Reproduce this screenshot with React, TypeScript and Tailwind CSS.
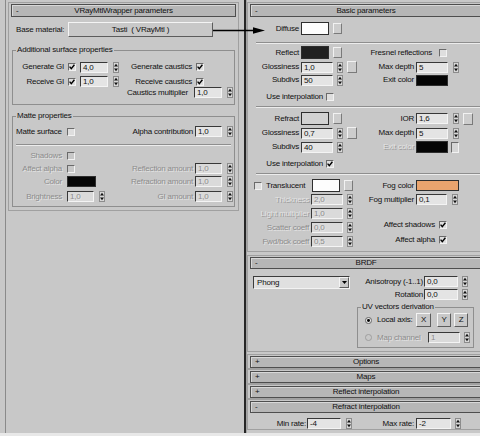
import type { ReactNode } from 'react'

type Tone = 'on' | 'dim' | 'faint'

const toneCls: Record<Tone, string> = {
  on:    'text-[#111111]',
  dim:   'text-[#8c8c8c] [text-shadow:1px_1px_0_#e4e4e4]',
  faint: 'text-[#e4e4e4] [text-shadow:1px_1px_0_#989898]',
}

function Txt({ className = '', tone = 'on', children }: { className?: string; tone?: Tone; children: ReactNode }) {
  return <span className={`shrink-0 whitespace-nowrap leading-[10px] ${toneCls[tone]} ${className}`}>{children}</span>
}

function Row({ className = '', children }: { className?: string; children?: ReactNode }) {
  return <div className={`flex items-center ${className}`}>{children}</div>
}

function Arrows({ className = '' }: { className?: string }) {
  return (
    <svg width="6" height="11" viewBox="0 0 6 11" className={`shrink-0 ${className}`}>
      <rect x="0.5" y="0.5" width="5" height="10" fill="#d8d8d8" stroke="#8c8c8c" />
      <path d="M3 1.8 L5 4.6 H1 Z" fill="#111" />
      <path d="M3 9.2 L5 6.4 H1 Z" fill="#111" />
    </svg>
  )
}

function Spin({
  value, w, className = '', gap = 'ml-[5px]', tone = 'on',
}: { value: string; w: string; className?: string; gap?: string; tone?: Tone }) {
  return (
    <div className={`flex items-center shrink-0 ${className}`}>
      <div
        className={`${w} h-[11px] pl-[2px] leading-[9px] border border-t-[#383838] border-l-[#383838] border-b-[#f4f4f4] border-r-[#f4f4f4] ${tone === 'on' ? 'bg-[#e4e4e4]' : 'bg-[#dadada]'} ${toneCls[tone]}`}
      >
        {value}
      </div>
      <Arrows className={gap} />
    </div>
  )
}

function Check({ on = false, dis = false, className = '' }: { on?: boolean; dis?: boolean; className?: string }) {
  return (
    <div
      className={`w-[8px] h-[8px] shrink-0 flex items-center justify-center border border-t-[#6a6a6a] border-l-[#6a6a6a] border-b-[#f2f2f2] border-r-[#f2f2f2] ${dis ? 'bg-[#c8c8c8]' : 'bg-[#dedede]'} ${className}`}
    >
      {on && (
        <svg width="6" height="6" viewBox="0 0 6 6">
          <path d="M0.6 2.6 L2.3 4.7 L5.4 0.8" fill="none" stroke="#000" strokeWidth="1.4" />
        </svg>
      )}
    </div>
  )
}

function Swatch({ className = '' }: { className?: string }) {
  return <div className={`shrink-0 border border-[#2e2e2e] ${className}`} />
}

function MapBtn({ className = '', size = 'w-[9px] h-[11px]' }: { className?: string; size?: string }) {
  return (
    <div className={`${size} shrink-0 bg-[#cdcdcd] border border-t-[#f2f2f2] border-l-[#f2f2f2] border-b-[#7a7a7a] border-r-[#7a7a7a] ${className}`} />
  )
}

function Raised({ className = '', children }: { className?: string; children?: ReactNode }) {
  return (
    <div
      className={`shrink-0 flex items-center justify-center bg-[#c8c8c8] border border-t-[#f4f4f4] border-l-[#f4f4f4] border-b-[#5c5c5c] border-r-[#5c5c5c] ${className}`}
    >
      {children}
    </div>
  )
}

function Radio({ on = false, dis = false }: { on?: boolean; dis?: boolean }) {
  return (
    <svg width="7" height="7" viewBox="0 0 8 8" className="shrink-0">
      <circle cx="4" cy="4" r="3.5" fill={dis ? '#c8c8c8' : '#e6e6e6'} stroke={dis ? '#9a9a9a' : '#5a5a5a'} />
      {on && <circle cx="4" cy="4" r="1.7" fill="#000" />}
    </svg>
  )
}

function Sep({ className = '' }: { className?: string }) {
  return <div className={`h-[2px] border-t border-t-[#8e8e8e] border-b border-b-[#ececec] ${className}`} />
}

function Group({ title, className = '', children }: { title: string; className?: string; children: ReactNode }) {
  return (
    <fieldset className={`border border-[#8e8e8e] ${className}`}>
      <legend className="ml-[3px] px-[1px] leading-[10px] whitespace-nowrap">{title}</legend>
      {children}
    </fieldset>
  )
}

function Rollout({
  title, open = true, hdr = 'h-[13px]', className = '', children,
}: { title: string; open?: boolean; hdr?: string; className?: string; children?: ReactNode }) {
  return (
    <div className={`border border-[#a0a0a0] px-[2px] pt-[1px] ${className}`}>
      <div
        className={`${hdr} grid grid-cols-[14px_1fr_14px] items-center bg-[#b6b6b6] border border-[#4e4e4e] shadow-[inset_1px_1px_0_#d8d8d8]`}
      >
        <span className="pl-[4px] leading-[10px]">{open ? '-' : '+'}</span>
        <span className="text-center leading-[10px] whitespace-nowrap">{title}</span>
        <span />
      </div>
      {open && children}
    </div>
  )
}

function LeftPanel() {
  return (
    <div className="w-[244px] shrink-0 pl-[5px]">
      <div className="h-full border-l border-l-[#8a8a8a] pl-[2px] pt-[2px]">
        <Rollout title="VRayMtlWrapper parameters" className="w-[231px]">
          <div className="pb-[3px]">
            <Row className="h-[15px] mt-[5px] pl-[5px]">
              <Txt className="w-[52px]">Base material:</Txt>
              <Raised className="w-[145px] h-[15px] whitespace-pre">Tasti  ( VRayMtl )</Raised>
            </Row>

            <Group title="Additional surface properties" className="mx-[1px] mt-[8px] pb-[6px]">
              <Row className="h-[12px] mt-[6px]">
                <div className="w-[106px] shrink-0 flex items-center">
                  <Txt className="w-[51px] text-right">Generate GI</Txt>
                  <Check on className="ml-[4px]" />
                  <Spin w="w-[28px]" value="4,0" className="ml-[4px]" />
                </div>
                <Txt className="w-[73px] text-right">Generate caustics</Txt>
                <Check on className="ml-[4px]" />
              </Row>
              <Row className="h-[11px] mt-[3px]">
                <div className="w-[106px] shrink-0 flex items-center">
                  <Txt className="w-[51px] text-right">Receive GI</Txt>
                  <Check on className="ml-[4px]" />
                  <Spin w="w-[28px]" value="1,0" className="ml-[4px]" />
                </div>
                <Txt className="w-[73px] text-right">Receive caustics</Txt>
                <Check on className="ml-[4px]" />
              </Row>
              <Row className="h-[11px]">
                <div className="w-[106px] shrink-0" />
                <Txt className="w-[69px] text-right">Caustics multiplier</Txt>
                <Spin w="w-[28px]" value="1,0" className="ml-[6px]" />
              </Row>
            </Group>

            <Group title="Matte properties" className="mx-[1px] mt-[6px] pb-[4px]">
              <Row className="h-[11px] mt-[5px]">
                <div className="w-[100px] shrink-0 flex items-center">
                  <Txt className="w-[51px] pl-[3px]">Matte surface</Txt>
                  <Check className="ml-[3px]" />
                </div>
                <Txt className="w-[80px] text-right">Alpha contribution</Txt>
                <Spin w="w-[27px]" value="1,0" className="ml-[2px]" />
              </Row>

              <Sep className="mt-[7px] mx-[3px]" />

              <Row className="h-[11px] mt-[4px]">
                <Txt tone="dim" className="w-[49px] text-right">Shadows</Txt>
                <Check dis className="ml-[5px]" />
              </Row>
              <Row className="h-[11px] mt-[2px]">
                <div className="w-[100px] shrink-0 flex items-center">
                  <Txt tone="dim" className="w-[49px] text-right">Affect alpha</Txt>
                  <Check dis className="ml-[5px]" />
                </div>
                <Txt tone="dim" className="w-[80px] text-right">Reflection amount</Txt>
                <Spin tone="dim" w="w-[27px]" value="1,0" className="ml-[2px]" />
              </Row>
              <Row className="h-[11px] mt-[2px]">
                <div className="w-[100px] shrink-0 flex items-center">
                  <Txt tone="dim" className="w-[49px] text-right">Color</Txt>
                  <Swatch className="ml-[5px] w-[29px] h-[11px] bg-[#050505]" />
                </div>
                <Txt tone="dim" className="w-[80px] text-right">Refraction amount</Txt>
                <Spin tone="dim" w="w-[27px]" value="1,0" className="ml-[2px]" />
              </Row>
              <Row className="h-[11px] mt-[4px]">
                <div className="w-[100px] shrink-0 flex items-center">
                  <Txt tone="dim" className="w-[49px] text-right">Brightness</Txt>
                  <Spin tone="dim" w="w-[27px]" value="1,0" className="ml-[5px]" />
                </div>
                <Txt tone="dim" className="w-[80px] text-right">GI amount</Txt>
                <Spin tone="dim" w="w-[27px]" value="1,0" className="ml-[2px]" />
              </Row>
            </Group>
          </div>
        </Rollout>
      </div>
    </div>
  )
}

function Left({ children }: { children: ReactNode }) {
  return <div className="w-[110px] shrink-0 flex items-center">{children}</div>
}

function BasicParams() {
  return (
    <div className="pb-[4px]">
      <Row className="h-[13px] mt-[5px]">
        <Txt className="w-[49px] text-right">Diffuse</Txt>
        <Swatch className="ml-[2px] w-[28px] h-[13px] bg-[#fdfdfd]" />
        <MapBtn className="ml-[4px]" />
      </Row>

      <Sep className="mt-[7px] ml-[6px]" />

      {/* reflection */}
      <Row className="h-[13px] mt-[2px]">
        <Left>
          <Txt className="w-[49px] text-right">Reflect</Txt>
          <Swatch className="ml-[2px] w-[28px] h-[13px] bg-[#212121]" />
          <MapBtn className="ml-[4px]" />
        </Left>
        <Txt className="w-[72px] text-right">Fresnel reflections</Txt>
        <Check className="ml-[7px]" />
      </Row>
      <Row className="h-[12px] mt-[2px]">
        <Left>
          <Txt className="w-[49px] text-right">Glossiness</Txt>
          <Spin w="w-[32px]" value="1,0" className="ml-[2px]" gap="ml-[4px]" />
          <MapBtn className="ml-[4px]" size="w-[10px] h-[12px]" />
        </Left>
        <Txt className="w-[54px] text-right">Max depth</Txt>
        <Spin w="w-[32px]" value="5" className="ml-[2px]" />
      </Row>
      <Row className="h-[12px] mt-[1px]">
        <Left>
          <Txt className="w-[49px] text-right">Subdivs</Txt>
          <Spin w="w-[32px]" value="50" className="ml-[2px]" gap="ml-[4px]" />
        </Left>
        <Txt className="w-[54px] text-right">Exit color</Txt>
        <Swatch className="ml-[2px] w-[32px] h-[11px] bg-[#050505]" />
      </Row>
      <Row className="h-[12px] mt-[5px]">
        <Txt className="w-[73px] text-right">Use interpolation</Txt>
        <Check className="ml-[3px]" />
      </Row>

      <Sep className="mt-[3px] ml-[6px]" />

      {/* refraction */}
      <Row className="h-[13px] mt-[4px]">
        <Left>
          <Txt className="w-[49px] text-right">Refract</Txt>
          <Swatch className="ml-[2px] w-[28px] h-[13px] bg-[#d2d2d2]" />
          <MapBtn className="ml-[4px]" />
        </Left>
        <Txt className="w-[54px] text-right">IOR</Txt>
        <Spin w="w-[32px]" value="1,6" className="ml-[2px]" />
        <MapBtn className="ml-[4px]" size="w-[10px] h-[12px]" />
      </Row>
      <Row className="h-[12px] mt-[2px]">
        <Left>
          <Txt className="w-[49px] text-right">Glossiness</Txt>
          <Spin w="w-[32px]" value="0,7" className="ml-[2px]" gap="ml-[4px]" />
          <MapBtn className="ml-[4px]" size="w-[10px] h-[12px]" />
        </Left>
        <Txt className="w-[54px] text-right">Max depth</Txt>
        <Spin w="w-[32px]" value="5" className="ml-[2px]" />
      </Row>
      <Row className="h-[12px] mt-[2px]">
        <Left>
          <Txt className="w-[49px] text-right">Subdivs</Txt>
          <Spin w="w-[32px]" value="40" className="ml-[2px]" gap="ml-[4px]" />
        </Left>
        <Txt tone="faint" className="w-[54px] text-right">Exit color</Txt>
        <Swatch className="ml-[2px] w-[32px] h-[12px] bg-[#050505]" />
        <div className="ml-[3px] w-[8px] h-[11px] shrink-0 bg-[#d6d6d6] border border-t-[#6a6a6a] border-l-[#6a6a6a] border-b-[#f2f2f2] border-r-[#f2f2f2]" />
      </Row>
      <Row className="h-[12px] mt-[5px]">
        <Txt className="w-[73px] text-right">Use interpolation</Txt>
        <Check on className="ml-[3px]" />
      </Row>

      <Sep className="mt-[3px] ml-[6px]" />

      {/* translucency / fog */}
      <div className="flex mt-[4px]">
        <div className="w-[110px] shrink-0">
          <Row className="h-[13px]">
            <Check className="ml-[4px]" />
            <Txt className="ml-[4px] w-[43px]">Translucent</Txt>
            <Swatch className="ml-[3px] w-[28px] h-[13px] bg-[#fdfdfd]" />
            <MapBtn className="ml-[4px]" />
          </Row>
          <Row className="h-[11px] mt-[2px]">
            <Txt tone="faint" className="w-[59px] text-right">Thickness</Txt>
            <Spin tone="dim" w="w-[32px]" value="2,0" className="ml-[2px]" gap="ml-[4px]" />
          </Row>
          <Row className="h-[11px] mt-[3px]">
            <Txt tone="faint" className="w-[59px] text-right">Light multiplier</Txt>
            <Spin tone="dim" w="w-[32px]" value="1,0" className="ml-[2px]" gap="ml-[4px]" />
          </Row>
          <Row className="h-[11px] mt-[3px]">
            <Txt tone="dim" className="w-[59px] text-right">Scatter coeff</Txt>
            <Spin tone="dim" w="w-[32px]" value="0,0" className="ml-[2px]" gap="ml-[4px]" />
          </Row>
          <Row className="h-[11px] mt-[3px]">
            <Txt tone="dim" className="w-[59px] text-right">Fwd/bck coeff</Txt>
            <Spin tone="dim" w="w-[32px]" value="0,5" className="ml-[2px]" gap="ml-[4px]" />
          </Row>
        </div>
        <div>
          <Row className="h-[13px]">
            <Txt className="w-[54px] text-right">Fog color</Txt>
            <Swatch className="ml-[2px] w-[43px] h-[11px] bg-[#eaa46e]" />
          </Row>
          <Row className="h-[11px] mt-[2px]">
            <Txt className="w-[54px] text-right">Fog multiplier</Txt>
            <Spin w="w-[31px]" value="0,1" className="ml-[2px]" />
          </Row>
          <Row className="h-[11px] mt-[14px]">
            <Txt className="w-[75px] text-right">Affect shadows</Txt>
            <Check on className="ml-[4px]" />
          </Row>
          <Row className="h-[11px] mt-[4px]">
            <Txt className="w-[75px] text-right">Affect alpha</Txt>
            <Check on className="ml-[4px]" />
          </Row>
        </div>
      </div>
    </div>
  )
}

function Brdf() {
  return (
    <div className="flex pb-[3px]">
      <div className="w-[103px] shrink-0 pl-[3px] pt-[7px]">
        <div className="flex w-[97px] h-[13px] bg-[#e0e0e0] border border-t-[#3c3c3c] border-l-[#3c3c3c] border-b-[#f2f2f2] border-r-[#f2f2f2]">
          <span className="flex-1 pl-[3px] leading-[11px]">Phong</span>
          <Raised className="w-[10px] h-full">
            <svg width="5" height="3" viewBox="0 0 5 3">
              <path d="M0 0 H5 L2.5 3 Z" fill="#000" />
            </svg>
          </Raised>
        </div>
      </div>
      <div className="pt-[7px]">
        <Row className="h-[11px]">
          <Txt className="w-[70px] text-right">Anisotropy (-1..1)</Txt>
          <Spin w="w-[34px]" value="0,0" className="ml-[1px]" gap="ml-[4px]" />
        </Row>
        <Row className="h-[11px] mt-[2px]">
          <Txt className="w-[70px] text-right">Rotation</Txt>
          <Spin w="w-[34px]" value="0,0" className="ml-[1px]" gap="ml-[4px]" />
        </Row>
        <Group title="UV vectors derivation" className="ml-[4px] w-[117px] mt-[2px] pb-[4px]">
          <Row className="h-[14px] mt-[1px]">
            <span className="ml-[7px] flex"><Radio on /></span>
            <Txt className="ml-[5px] w-[37px]">Local axis:</Txt>
            <Raised className="ml-[2px] w-[15px] h-[14px]">X</Raised>
            <Raised className="ml-[6px] w-[14px] h-[14px]">Y</Raised>
            <Raised className="ml-[3px] w-[14px] h-[14px]">Z</Raised>
          </Row>
          <Row className="h-[11px] mt-[5px]">
            <span className="ml-[7px] flex"><Radio dis /></span>
            <Txt tone="dim" className="ml-[5px] w-[51px]">Map channel</Txt>
            <Spin tone="dim" w="w-[32px]" value="1" gap="ml-[4px]" />
          </Row>
        </Group>
      </div>
    </div>
  )
}

function RightPanel() {
  return (
    <div className="w-[233px] shrink-0 overflow-hidden pt-[2px]">
      <div className="w-[238px]">
        <Rollout title="Basic parameters">
          <BasicParams />
        </Rollout>
        <Rollout title="BRDF" hdr="h-[12px]" className="mt-[3px]">
          <Brdf />
        </Rollout>
        <Rollout title="Options" open={false} hdr="h-[12px]" className="mt-[2px]" />
        <Rollout title="Maps" open={false} hdr="h-[12px]" />
        <Rollout title="Reflect interpolation" open={false} hdr="h-[12px]" />
        <Rollout title="Refract interpolation" hdr="h-[12px]">
          <Row className="h-[11px] mt-[5px]">
            <Txt className="w-[56px] text-right">Min rate:</Txt>
            <Spin w="w-[34px]" value="-4" className="ml-[1px]" />
            <Txt className="w-[62px] text-right">Max rate:</Txt>
            <Spin w="w-[35px]" value="-2" className="ml-[2px]" gap="ml-[4px]" />
          </Row>
        </Rollout>
      </div>
    </div>
  )
}

// pointer from the base material button to the Diffuse slot
function LinkArrow() {
  return (
    <svg className="absolute left-[212px] top-[26px]" width="56" height="9" viewBox="0 0 56 9">
      <path d="M1 4.5 H44" stroke="#000" strokeWidth="1.4" />
      <path d="M41 1.2 L53 4.5 L41 7.8 Z" fill="#000" />
    </svg>
  )
}

export default function App() {
  return (
    <div className="relative w-[480px] h-[436px] overflow-hidden bg-[#c8c8c8] font-['Liberation_Sans',Arial,sans-serif] text-[8px] tracking-[-0.2px] text-[#111111] select-none">
      <div className="flex h-[433px]">
        <LeftPanel />
        <div className="w-[2px] shrink-0 bg-[#262626]" />
        <div className="w-[1px] shrink-0 bg-[#a4a4a4]" />
        <RightPanel />
      </div>
      <div className="h-[3px] bg-[#e8e8e8]" />
      <LinkArrow />
    </div>
  )
}
